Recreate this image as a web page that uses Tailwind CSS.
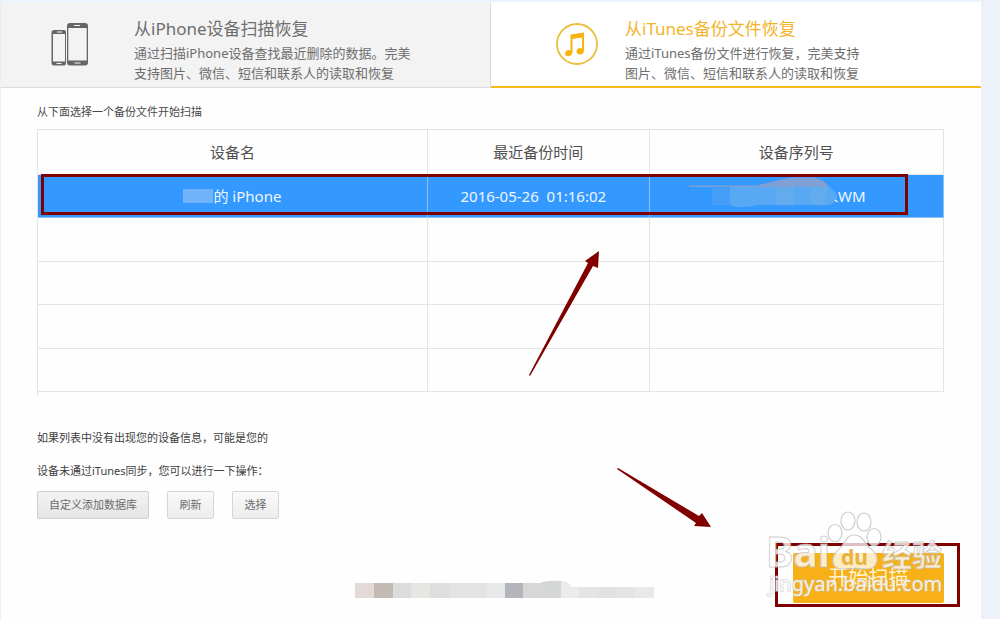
<!DOCTYPE html>
<html lang="zh-CN">
<head>
    <meta charset="UTF-8">
    <meta name="viewport" content="width=device-width, initial-scale=1.0">
    <title>从iTunes备份文件恢复</title>
    <script src="https://cdn.jsdelivr.net/npm/@tailwindcss/browser@4"></script>
</head>
<body class="bg-[#ecf1fa] font-['Noto_Sans','Noto_Sans_CJK_SC',sans-serif]">
    <div class="relative min-h-screen mr-[19px] bg-[#fefefe] border-l border-[#e6eefc]">

        <!-- Tabs -->
        <nav class="flex border-t-2 border-[#eaf3fc]">
            <a href="#" class="flex w-1/2 bg-[#f3f3f3] border-b border-r border-[#dcdcdc] pt-[15px] pb-1 text-[#6e6e6e]">
                <span class="w-[133px] shrink-0 pl-[50px] pt-[6px]">
                    <svg class="w-[38px] h-[44px]" viewBox="51 23 38 44">
                        <path fill="#666" fill-rule="evenodd" d="M54 30h10q2 0 2 2v31q0 2.500-2 2.500H54q-2.500 0-2.500-2.500V32.500q0-2.500 2.500-2.500zM53 34v27.500h12V34z"/>
                        <path fill="#666" fill-rule="evenodd" d="M70 23h15q3 0 3 3v36.500q0 3-3 3H70q-3 0-3-3V26q0-3 3-3zM68.300 28v32.500h18.400V28z"/>
                        <path stroke="#f3f3f3" d="M57 32h5M74 25.500h6M56.500 63.500h5M74.500 63h6"/>
                    </svg>
                </span>
                <span>
                    <span class="block text-[17px] leading-[24px]">从iPhone设备扫描恢复</span>
                    <span class="block mt-[2px] text-[13px] leading-[20px]">通过扫描iPhone设备查找最近删除的数据。完美<br>支持图片、微信、短信和联系人的读取和恢复</span>
                </span>
            </a>
            <a href="#" class="flex w-1/2 bg-white border-b-2 border-[#fbb81c] pt-[15px] pb-[3px] text-[#6e6e6e]">
                <span class="w-[134px] shrink-0 pl-[65px] pt-[6px]">
                    <svg class="w-[42px] h-[42px]" viewBox="0 0 42 42">
                        <circle cx="21" cy="21" r="20" fill="none" stroke="#ecbe3c" stroke-width="1.800"/>
                        <path fill="#f8b30f" fill-rule="evenodd" d="M14.500 11.500L28 9.500v18c0 2.500-2 4-4 4s-3.500-1-3.500-3 1.500-3.500 3.500-3.500c.8 0 1.500.2 2 .5V14.500L16.500 16v13c0 2.500-2 4.300-4.300 4.300-2 0-3.200-1-3.200-2.800s1.500-3.600 3.500-3.600c.8 0 1.500.2 2 .5z"/>
                    </svg>
                </span>
                <span>
                    <span class="block text-[17px] leading-[24px] text-[#f3b42a]">从iTunes备份文件恢复</span>
                    <span class="block mt-[2px] text-[13px] leading-[20px]">通过iTunes备份文件进行恢复，完美支持<br>图片、微信、短信和联系人的读取和恢复</span>
                </span>
            </a>
        </nav>

        <main class="pl-9 pr-[37px] pt-4">
            <p class="text-[11px] leading-4 text-[#4a4a4a]">从下面选择一个备份文件开始扫描</p>

            <!-- Backup list -->
            <div class="relative mt-[9px] border-l border-[#e4e4e4] pb-1">
                <table class="w-full table-fixed border-collapse text-center text-[15px] leading-5 text-[#505050]">
                    <colgroup>
                        <col class="w-[43%]">
                        <col class="w-[24.5%]">
                        <col>
                    </colgroup>
                    <thead>
                        <tr class="h-[45px]">
                            <th class="border border-l-0 border-[#e4e4e4] font-normal">设备名</th>
                            <th class="border border-[#e4e4e4] font-normal">最近备份时间</th>
                            <th class="border border-[#e4e4e4] font-normal">设备序列号</th>
                        </tr>
                    </thead>
                    <tbody>
                        <tr class="h-[43px] bg-[#3399ff] text-[#eef6ff]">
                            <td class="border border-l-0 border-[#8fbfea]">
                                <span class="flex items-center justify-center">
                                    <span class="w-[30px] h-[14px] bg-[#70b3fb]"></span>的 iPhone
                                </span>
                            </td>
                            <td class="border border-[#8fbfea] whitespace-pre pr-[10px]">2016-05-26  01:16:02</td>
                            <td class="border border-[#8fbfea] pr-[38px]">
                                <span class="flex items-center justify-center">
                                    <svg class="w-[149px] h-[38px]" viewBox="688 177 149 38">
                                        <path fill="#7f9fd5" d="M688 185.500h68c18-4 28-8 40-8h16q10 1 16 9v2h-72v-1.500h-68z"/>
                                        <path fill="#459ff8" d="M711 188h18v17h-18z"/>
                                        <path fill="#58a8f3" d="M729 187h99q8 5 8 10t-8 8h-72q-8 2-20 2-5 0-7-3z"/>
                                        <path fill="#62acee" d="M775 187h18v18h-18zM810 187h16v18h-16z"/>
                                        <path stroke="#eef6ff" stroke-width="1.500" d="M834 200l2.500 2"/>
                                    </svg>WM
                                </span>
                            </td>
                        </tr>
                        <tr class="h-[44px]"><td class="border border-l-0 border-[#e4e4e4]"></td><td class="border border-[#e4e4e4]"></td><td class="border border-[#e4e4e4]"></td></tr>
                        <tr class="h-[43px]"><td class="border border-l-0 border-[#e4e4e4]"></td><td class="border border-[#e4e4e4]"></td><td class="border border-[#e4e4e4]"></td></tr>
                        <tr class="h-[44px]"><td class="border border-l-0 border-[#e4e4e4]"></td><td class="border border-[#e4e4e4]"></td><td class="border border-[#e4e4e4]"></td></tr>
                        <tr class="h-[43px]"><td class="border border-l-0 border-[#e4e4e4]"></td><td class="border border-[#e4e4e4]"></td><td class="border border-[#e4e4e4]"></td></tr>
                    </tbody>
                </table>
                <!-- Highlighted row -->
                <div class="absolute left-[3px] right-9 top-[45px] h-[41px] border-3 border-[#800000]"></div>
            </div>

            <p class="mt-[34px] text-[11px] leading-4 text-[#404040]">如果列表中没有出现您的设备信息，可能是您的</p>
            <p class="mt-[17px] text-[11px] leading-4 text-[#404040]">设备未通过iTunes同步，您可以进行一下操作：</p>

            <div class="mt-3 flex gap-[18px] text-[11px] text-[#6c6c6c]">
                <button class="h-7 w-28 rounded-xs border border-[#cfcfcf] bg-linear-to-b from-[#f3f3f3] to-[#e6e6e6]">自定义添加数据库</button>
                <button class="h-7 w-[47px] rounded-xs border border-[#d6d6d6] bg-linear-to-b from-[#fafafa] to-[#ededed]">刷新</button>
                <button class="h-7 w-[47px] rounded-xs border border-[#d6d6d6] bg-linear-to-b from-[#fafafa] to-[#ededed]">选择</button>
            </div>

            <div class="mt-[34px] pb-4 flex items-end justify-end gap-[139px]">
                <svg class="w-[299px] h-[19px] mb-1" viewBox="0 0 299 19">
                    <path fill="#e3d9d6" d="M0 3h19v15H0z"/>
                    <path fill="#c3bab4" d="M19 3h19v15H19z"/>
                    <path fill="#dcdcdc" d="M38 3h18v15H38z"/>
                    <path fill="#e6e6e3" d="M56 3h19v15H56z"/>
                    <path fill="#dedede" d="M75 3h19v15H75z"/>
                    <path fill="#e3e3e3" d="M94 3h37v15H94z"/>
                    <path fill="#e7e9e8" d="M131 3h19v15h-19z"/>
                    <path fill="#b4b5ba" d="M150 3h18v15h-18z"/>
                    <path fill="#d7d7d7" d="M168 3h19v15h-19z"/>
                    <path fill="#d5d7d6" d="M187 2q10-2 19-1v17h-19z"/>
                    <path fill="#eaecec" d="M206 1q8 0 10 6h8v11h-18z"/>
                    <path fill="#e4e4e4" d="M224 7h19v11h-19zM262 7h18v11h-18z"/>
                    <path fill="#dfe2e0" d="M243 7h19v11h-19z"/>
                    <path fill="#e9e9e9" d="M280 7h19v11h-19z"/>
                </svg>
                <div class="relative">
                    <button class="block w-[151px] h-[50px] rounded-xs bg-[#f7b016] text-[20px] text-[#fff4d6]">开始扫描</button>
                    <div class="absolute -left-[18px] -right-4 -top-[10px] -bottom-1 border-3 border-[#800000]"></div>
                    <!-- Watermark -->
                    <svg class="absolute -left-[33px] -top-[53px] w-[200px] h-[110px] pointer-events-none" viewBox="760 500 200 110">
                        <g fill="#fff" fill-opacity=".75" stroke="#c8c8c8" stroke-opacity=".9" stroke-width="1.200">
                            <ellipse cx="835" cy="533" rx="7" ry="8.500"/>
                            <ellipse cx="848" cy="521" rx="7" ry="9"/>
                            <ellipse cx="864" cy="522" rx="7" ry="9"/>
                            <ellipse cx="874" cy="537" rx="7" ry="8.500"/>
                            <path d="M854 535c8 0 10 7 15 12s9 8 8 14-6 8-11 8c-8-1-15-1-23 0-6 0-11-3-10-10s6-9 9-13 5-11 12-11z"/>
                        </g>
                        <g font-family="Noto Sans, Noto Sans CJK SC, sans-serif" fill="#fff" fill-opacity=".78" stroke="#bdbdbd" stroke-opacity=".7" stroke-width="1">
                            <text x="766" y="567" font-size="41" font-weight="700">Bai</text>
                            <text x="882" y="566" font-size="30" font-weight="700">经验</text>
                        </g>
                        <text x="769" y="591" font-family="Noto Sans, sans-serif" font-size="20" fill="#fff" fill-opacity=".8" stroke="#c4c4c4" stroke-width="1.600" stroke-opacity=".6" paint-order="stroke">jingyan.baidu.com</text>
                        <text x="841" y="565" font-family="Noto Sans, sans-serif" font-size="21" font-weight="700" fill="#e9b23c">du</text>
                    </svg>
                </div>
            </div>
        </main>

        <!-- Arrows -->
        <svg class="absolute left-[528px] top-[250px] w-[72px] h-[127px] pointer-events-none" viewBox="529 250 72 127">
            <path fill="#800000" d="M599 251l-1 17-5-2L530 376l-1-1L588 263l-3-2z"/>
        </svg>
        <svg class="absolute left-[616px] top-[468px] w-[96px] h-[61px] pointer-events-none" viewBox="617 468 96 61">
            <path fill="#800000" d="M711 527l-17-1 2-3L617 469l1-1 81 48 3-3z"/>
        </svg>
    </div>
</body>
</html>
